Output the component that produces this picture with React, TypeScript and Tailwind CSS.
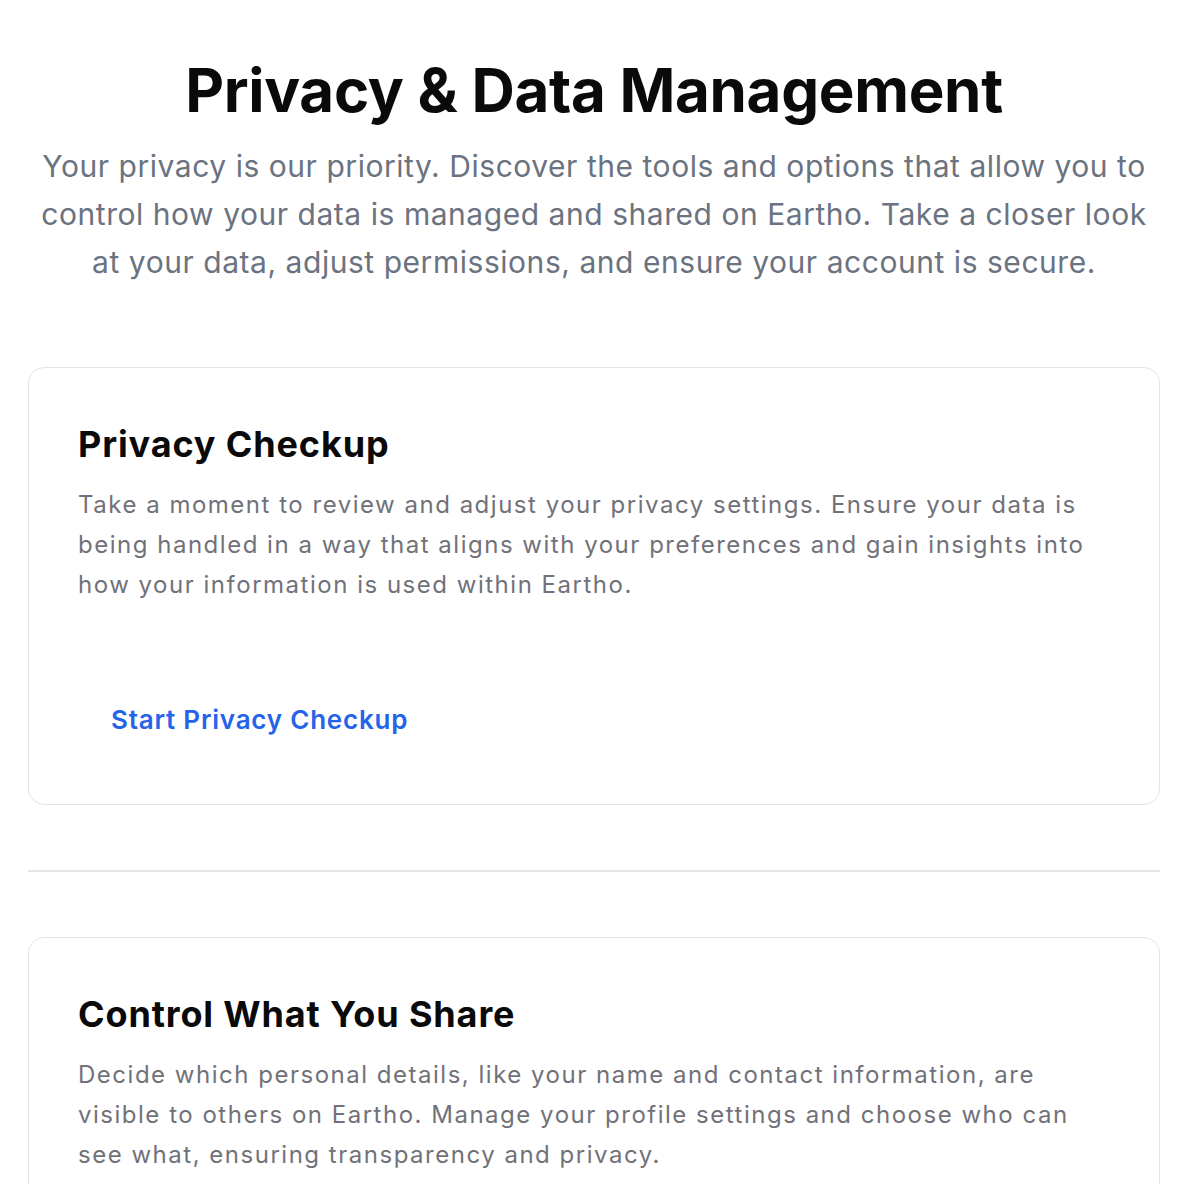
import React from "react";

function Card({ title, body, action }: { title: string; body: string; action?: string }) {
  return (
    <div className="rounded-2xl border border-[#e4e4e7] bg-white px-12 pt-14 pb-14">
      <h2 className="pl-px text-[36px] leading-[40px] font-bold tracking-[0.024em] text-[#0a0a0a]">{title}</h2>
      <p className="mt-[21px] pl-px text-[24px] leading-[40px] tracking-[0.063em] text-[#71717a]">{body}</p>
      {action && (
        <div className="mt-[87px]">
          <button className="pl-[34px] pr-8 py-3 text-[26px] leading-[32px] font-semibold tracking-[0.03em] text-[#2563eb]">
            {action}
          </button>
        </div>
      )}
    </div>
  );
}

export default function App() {
  return (
    <div className="min-h-screen bg-white" style={{ fontFamily: "Inter, 'Noto Sans', sans-serif" }}>
      <div className="pl-7 pr-6 pt-[60px]">
        <h1 className="text-center text-[60px] leading-[60px] font-bold tracking-[-0.005em] text-[#0a0a0a]">
          Privacy &amp; Data Management
        </h1>
        <p className="mx-auto mt-[22px] max-w-[1112px] text-center text-[30px] leading-[48px] tracking-[0.018em] text-[#6b7280]">
          Your privacy is our priority. Discover the tools and options that allow you to control how your data is managed and shared on Eartho. Take a closer look at your data, adjust permissions, and ensure your account is secure.
        </p>
        <div className="mt-[81px]">
          <Card
            title="Privacy Checkup"
            body="Take a moment to review and adjust your privacy settings. Ensure your data is being handled in a way that aligns with your preferences and gain insights into how your information is used within Eartho."
            action="Start Privacy Checkup"
          />
          <hr className="my-[65px] border-t-2 border-[#e5e5e5]" />
          <Card
            title="Control What You Share"
            body="Decide which personal details, like your name and contact information, are visible to others on Eartho. Manage your profile settings and choose who can see what, ensuring transparency and privacy."
          />
        </div>
      </div>
    </div>
  );
}
